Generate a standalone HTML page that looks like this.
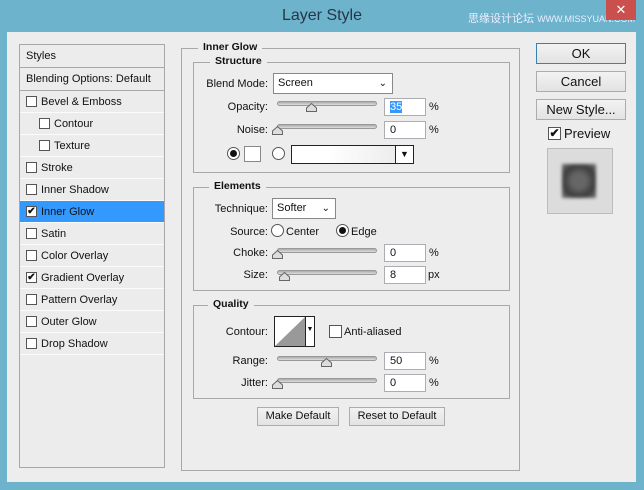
<!DOCTYPE html>
<html><head><meta charset="utf-8"><style>
*{margin:0;padding:0;box-sizing:border-box}
body{width:644px;height:490px;background:#6db3cc;position:relative;overflow:hidden;font-family:"Liberation Sans","Noto Sans CJK SC",sans-serif;font-size:11px;color:#111}
.a{position:absolute}
.title{left:0;top:7px;width:644px;text-align:center;font-size:16px;color:#26364a}
.wm{left:468px;top:10px;font-size:11px;color:#eef;letter-spacing:0}
.close{left:606px;top:0;width:30px;height:20px;background:#c9504c;color:#fff;text-align:center;font-size:13px;line-height:20px}
.cont{left:7px;top:32px;width:629px;height:450px;background:#ededed}
.list{left:19px;top:44px;width:146px;height:424px;border:1px solid #a8a8a8;background:#ececec}
.row{position:absolute;left:0;width:144px;height:22px;border-bottom:1px solid #fbfbfb;line-height:22px}
.cb{position:absolute;width:11px;height:11px;border:1px solid #555;background:#fff;font-size:10px;line-height:9px;text-align:center;font-weight:bold}
.sel{background:#3399ff}
.box{border:1px solid #a8a8a8}
.lg{position:absolute;background:#ededed;font-weight:bold;padding:0 5px;font-size:10.5px}
.btn{position:absolute;border:1px solid #acacac;background:linear-gradient(#f2f2f2,#e3e3e3);text-align:center}
.inp{position:absolute;width:42px;height:18px;border:1px solid #abadb3;background:#fff;line-height:16px;padding-left:5px}
.trk{position:absolute;width:100px;height:5px;border:1px solid #999;border-radius:3px;background:linear-gradient(#aaa,#ddd)}
.th{position:absolute;width:11px;height:9px}
.lab{position:absolute;text-align:right}
.rad{position:absolute;width:13px;height:13px;border:1px solid #555;border-radius:50%;background:#fff}
.rad.on::after{content:"";position:absolute;left:2px;top:2px;width:7px;height:7px;border-radius:50%;background:#111}
.dd{position:absolute;height:21px;border:1px solid #888;background:#fff;line-height:19px;padding-left:4px}
</style></head><body>
<div class="a title">Layer Style</div>
<div class="a wm">思缘设计论坛 <span style="font-size:9px">WWW.MISSYUAN.COM</span></div>
<div class="a close">✕</div>
<div class="a cont"></div>
<div class="a list">
<div class="row" style="top:0;height:23px;border-bottom:1px solid #a8a8a8;padding-left:6px">Styles</div>
<div class="row" style="top:23px;height:23px;border-bottom:1px solid #a8a8a8;padding-left:6px">Blending Options: Default</div>
<div class="row" style="top:46px"><span class="cb" style="left:6px;top:5px"></span><span style="position:absolute;left:21px">Bevel &amp; Emboss</span></div>
<div class="row" style="top:68px"><span class="cb" style="left:19px;top:5px"></span><span style="position:absolute;left:34px">Contour</span></div>
<div class="row" style="top:90px"><span class="cb" style="left:19px;top:5px"></span><span style="position:absolute;left:34px">Texture</span></div>
<div class="row" style="top:112px"><span class="cb" style="left:6px;top:5px"></span><span style="position:absolute;left:21px">Stroke</span></div>
<div class="row" style="top:134px"><span class="cb" style="left:6px;top:5px"></span><span style="position:absolute;left:21px">Inner Shadow</span></div>
<div class="row sel" style="top:156px"><span class="cb" style="left:6px;top:5px">✔</span><span style="position:absolute;left:21px">Inner Glow</span></div>
<div class="row" style="top:178px"><span class="cb" style="left:6px;top:5px"></span><span style="position:absolute;left:21px">Satin</span></div>
<div class="row" style="top:200px"><span class="cb" style="left:6px;top:5px"></span><span style="position:absolute;left:21px">Color Overlay</span></div>
<div class="row" style="top:222px"><span class="cb" style="left:6px;top:5px">✔</span><span style="position:absolute;left:21px">Gradient Overlay</span></div>
<div class="row" style="top:244px"><span class="cb" style="left:6px;top:5px"></span><span style="position:absolute;left:21px">Pattern Overlay</span></div>
<div class="row" style="top:266px"><span class="cb" style="left:6px;top:5px"></span><span style="position:absolute;left:21px">Outer Glow</span></div>
<div class="row" style="top:288px"><span class="cb" style="left:6px;top:5px"></span><span style="position:absolute;left:21px">Drop Shadow</span></div>
</div>

<div class="a box" style="left:181px;top:48px;width:339px;height:423px"></div>
<div class="lg" style="left:198px;top:41px">Inner Glow</div>

<div class="a box" style="left:193px;top:62px;width:317px;height:111px"></div>
<div class="lg" style="left:210px;top:55px">Structure</div>
<div class="lab" style="left:200px;top:78px;width:68px">Blend Mode:</div>
<div class="dd" style="left:273px;top:73px;width:120px">Screen<span style="position:absolute;right:5px;font-size:10px">&#8964;</span></div>
<div class="lab" style="left:200px;top:101px;width:68px">Opacity:</div>
<div class="trk" style="left:277px;top:101px"></div>
<svg class="th" style="left:306px;top:103px" viewBox="0 0 11 9"><path d="M0.5 8.5V5L5.5 0.5L10.5 5V8.5Z" fill="#ddd" stroke="#666"/></svg>
<div class="inp" style="left:384px;top:98px"><span style="background:#3399ff;color:#fff">35</span></div>
<div class="a" style="left:429px;top:101px">%</div>
<div class="lab" style="left:200px;top:124px;width:68px">Noise:</div>
<div class="trk" style="left:277px;top:124px"></div>
<svg class="th" style="left:272px;top:126px" viewBox="0 0 11 9"><path d="M0.5 8.5V5L5.5 0.5L10.5 5V8.5Z" fill="#ddd" stroke="#666"/></svg>
<div class="inp" style="left:384px;top:121px">0</div>
<div class="a" style="left:429px;top:124px">%</div>
<div class="rad on" style="left:227px;top:147px"></div>
<div class="a" style="left:244px;top:146px;width:17px;height:16px;border:1px solid #888;background:#fff"></div>
<div class="rad" style="left:272px;top:147px"></div>
<div class="a" style="left:291px;top:145px;width:123px;height:19px;border:1px solid #222;background:linear-gradient(90deg,#fff 30%,#e8e8e8)"></div>
<div class="a" style="left:395px;top:146px;width:18px;height:17px;border-left:1px solid #222;background:#fff;text-align:center;font-size:9px;line-height:17px">▼</div>

<div class="a box" style="left:193px;top:187px;width:317px;height:104px"></div>
<div class="lg" style="left:209px;top:180px">Elements</div>
<div class="lab" style="left:200px;top:203px;width:68px">Technique:</div>
<div class="dd" style="left:272px;top:198px;width:64px">Softer<span style="position:absolute;right:5px;font-size:10px">&#8964;</span></div>
<div class="lab" style="left:200px;top:226px;width:68px">Source:</div>
<div class="rad" style="left:271px;top:224px"></div>
<div class="a" style="left:286px;top:226px">Center</div>
<div class="rad on" style="left:336px;top:224px"></div>
<div class="a" style="left:351px;top:226px">Edge</div>
<div class="lab" style="left:200px;top:247px;width:68px">Choke:</div>
<div class="trk" style="left:277px;top:248px"></div>
<svg class="th" style="left:272px;top:250px" viewBox="0 0 11 9"><path d="M0.5 8.5V5L5.5 0.5L10.5 5V8.5Z" fill="#ddd" stroke="#666"/></svg>
<div class="inp" style="left:384px;top:244px">0</div>
<div class="a" style="left:429px;top:247px">%</div>
<div class="lab" style="left:200px;top:269px;width:68px">Size:</div>
<div class="trk" style="left:277px;top:270px"></div>
<svg class="th" style="left:279px;top:272px" viewBox="0 0 11 9"><path d="M0.5 8.5V5L5.5 0.5L10.5 5V8.5Z" fill="#ddd" stroke="#666"/></svg>
<div class="inp" style="left:384px;top:266px">8</div>
<div class="a" style="left:428px;top:269px">px</div>

<div class="a box" style="left:193px;top:305px;width:317px;height:94px"></div>
<div class="lg" style="left:208px;top:298px">Quality</div>
<div class="lab" style="left:200px;top:326px;width:68px">Contour:</div>
<div class="a" style="left:274px;top:316px;width:41px;height:31px;border:1px solid #222;background:#fff">
<svg width="31" height="29" style="position:absolute;left:0;top:0"><path d="M0 29L30 0V29Z" fill="#999"/></svg>
<div style="position:absolute;left:30px;top:0;width:9px;height:29px;border-left:1px solid #222;font-size:7px;text-align:center;line-height:26px">▼</div></div>
<div class="cb" style="left:329px;top:325px;width:13px;height:13px;position:absolute"></div>
<div class="a" style="left:344px;top:326px">Anti-aliased</div>
<div class="lab" style="left:200px;top:355px;width:68px">Range:</div>
<div class="trk" style="left:277px;top:356px"></div>
<svg class="th" style="left:321px;top:358px" viewBox="0 0 11 9"><path d="M0.5 8.5V5L5.5 0.5L10.5 5V8.5Z" fill="#ddd" stroke="#666"/></svg>
<div class="inp" style="left:384px;top:352px">50</div>
<div class="a" style="left:429px;top:355px">%</div>
<div class="lab" style="left:200px;top:377px;width:68px">Jitter:</div>
<div class="trk" style="left:277px;top:378px"></div>
<svg class="th" style="left:272px;top:380px" viewBox="0 0 11 9"><path d="M0.5 8.5V5L5.5 0.5L10.5 5V8.5Z" fill="#ddd" stroke="#666"/></svg>
<div class="inp" style="left:384px;top:374px">0</div>
<div class="a" style="left:429px;top:377px">%</div>

<div class="btn" style="left:257px;top:407px;width:82px;height:19px;line-height:17px">Make Default</div>
<div class="btn" style="left:349px;top:407px;width:96px;height:19px;line-height:17px">Reset to Default</div>

<div class="btn" style="left:536px;top:43px;width:90px;height:21px;line-height:19px;font-size:13px;border-color:#3c7fb1">OK</div>
<div class="btn" style="left:536px;top:71px;width:90px;height:21px;line-height:19px;font-size:13px">Cancel</div>
<div class="btn" style="left:536px;top:99px;width:90px;height:21px;line-height:19px;font-size:13px">New Style...</div>
<div class="cb" style="left:548px;top:127px;width:13px;height:13px;font-size:12px;line-height:11px;position:absolute">✔</div>
<div class="a" style="left:564px;top:126px;font-size:13px">Preview</div>
<div class="a" style="left:547px;top:148px;width:66px;height:66px;border:1px solid #bbb;background:#dcdcdc"></div>
<div class="a" style="left:562px;top:164px;width:34px;height:34px;background:radial-gradient(#666 30%,#3c3c3c 65%,#777);filter:blur(1.5px)"></div>
</body></html>
